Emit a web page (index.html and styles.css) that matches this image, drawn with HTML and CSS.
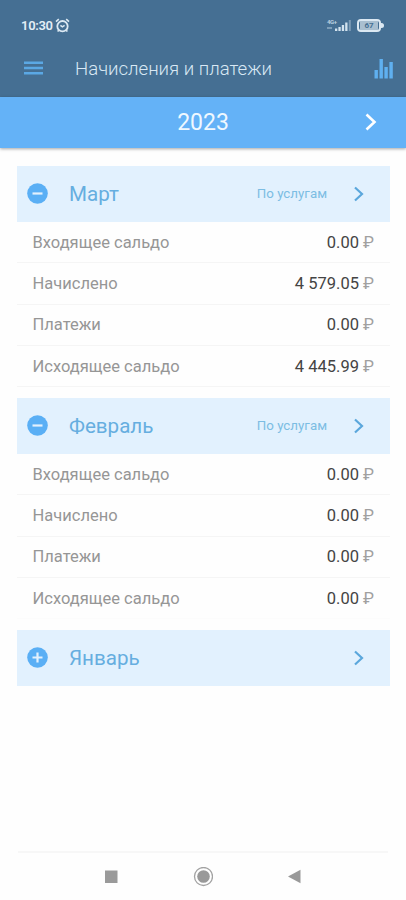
FILE: index.html
```html
<!DOCTYPE html>
<html lang="ru">
<head>
<meta charset="utf-8">
<title>Начисления и платежи</title>
<link rel="stylesheet" href="styles.css">
</head>
<body>
<div class="app">
  <header class="top">
    <div class="status">
      <span class="time">10:30</span>
      <svg class="alarm" width="15" height="15" viewBox="0 0 15 15" fill="none" stroke="#dce9f3" stroke-width="1.8"><circle cx="7.5" cy="8.2" r="5.2"/><path d="M1 3.6 3.8 1.2M14 3.6 11.2 1.2M3.8 12.2 2.6 13.6M11.2 12.2l1.2 1.4M5.4 7.3l2 1.5 2.2-1.4" stroke-width="1.6"/></svg>
      <span class="net"><span>4G+</span><i></i></span>
      <svg class="signal" width="18" height="13" viewBox="0 0 18 13" fill="#d3e3ef"><path d="M1 9.5h2.3V12H1zM4.4 8h2.3v4H4.4zM7.8 6h2.3v6H7.8zM11.2 3.5h2.3V12h-2.3z"/><path d="M14.8 1h2v11h-2z" opacity=".4"/></svg>
      <span class="battery"><span class="charge">67</span></span>
    </div>
    <div class="bar">
      <svg class="menu" width="19" height="14" viewBox="0 0 19 14" fill="#5ba8e4"><path d="M0 .5h19v2.4H0zM0 5.8h19v2.4H0zM0 11.1h19v2.4H0z"/></svg>
      <h1 class="title">Начисления и платежи</h1>
      <svg class="chart" width="19" height="21" viewBox="0 0 19 21" fill="#5fb0f0"><path d="M.5 12h3.4v8.5H.5zM5.5 1h3.4v19.500H5.500zM10.400 9h3.400v11.500h-3.400zM15.400 4h3.400v16.500h-3.400z"/></svg>
    </div>
  </header>
  <div class="year">
    <span class="year-text">2023</span>
    <svg class="next" width="12" height="18" viewBox="0 0 12 18" fill="none" stroke="#fff" stroke-width="2.6"><path d="m1.5 1.5 8 7.5-8 7.5"/></svg>
  </div>
  <main class="list">
    <section class="group">
      <div class="head">
        <svg class="toggle" width="21" height="21" viewBox="0 0 21 21"><circle cx="10.5" cy="10.5" r="10.3" fill="#5aaff5"/><path d="M5.5 10.5h10" stroke="#e3f1fd" stroke-width="2.2"/></svg>
        <h2 class="month">Март</h2>
        <span class="link">По услугам</span>
        <svg class="go" width="11" height="16" viewBox="0 0 11 16" fill="none" stroke="#5ba7dc" stroke-width="2.2"><path d="m2 1.500 7 6.500-7 6.500"/></svg>
      </div>
      <div class="row"><span class="label">Входящее сальдо</span><span class="sum">0.00 <b>₽</b></span></div>
      <div class="row"><span class="label">Начислено</span><span class="sum">4 579.05 <b>₽</b></span></div>
      <div class="row"><span class="label">Платежи</span><span class="sum">0.00 <b>₽</b></span></div>
      <div class="row"><span class="label">Исходящее сальдо</span><span class="sum">4 445.99 <b>₽</b></span></div>
    </section>
    <section class="group">
      <div class="head">
        <svg class="toggle" width="21" height="21" viewBox="0 0 21 21"><circle cx="10.5" cy="10.5" r="10.3" fill="#5aaff5"/><path d="M5.5 10.5h10" stroke="#e3f1fd" stroke-width="2.2"/></svg>
        <h2 class="month">Февраль</h2>
        <span class="link">По услугам</span>
        <svg class="go" width="11" height="16" viewBox="0 0 11 16" fill="none" stroke="#5ba7dc" stroke-width="2.2"><path d="m2 1.500 7 6.500-7 6.500"/></svg>
      </div>
      <div class="row"><span class="label">Входящее сальдо</span><span class="sum">0.00 <b>₽</b></span></div>
      <div class="row"><span class="label">Начислено</span><span class="sum">0.00 <b>₽</b></span></div>
      <div class="row"><span class="label">Платежи</span><span class="sum">0.00 <b>₽</b></span></div>
      <div class="row last"><span class="label">Исходящее сальдо</span><span class="sum">0.00 <b>₽</b></span></div>
    </section>
    <section class="group">
      <div class="head">
        <svg class="toggle" width="21" height="21" viewBox="0 0 21 21"><circle cx="10.5" cy="10.5" r="10.3" fill="#5aaff5"/><path d="M5.5 10.5h10M10.5 5.5v10" stroke="#e3f1fd" stroke-width="2.2"/></svg>
        <h2 class="month">Январь</h2>
        <svg class="go" width="11" height="16" viewBox="0 0 11 16" fill="none" stroke="#5ba7dc" stroke-width="2.2"><path d="m2 1.500 7 6.500-7 6.500"/></svg>
      </div>
    </section>
  </main>
  <nav class="nav">
    <svg width="20" height="20" viewBox="0 0 20 20"><path d="M4 3.5h12.500V16H4z" fill="#9a9a9a"/></svg>
    <svg width="20" height="20" viewBox="0 0 20 20"><circle cx="10.5" cy="9.5" r="9" fill="none" stroke="#a2a2a2" stroke-width="1.3"/><circle cx="10.5" cy="9.5" r="6.3" fill="#999"/></svg>
    <svg width="20" height="20" viewBox="0 0 20 20"><path d="M3 9.500 15.500 2.700v13.600z" fill="#999"/></svg>
  </nav>
</div>
</body>
</html>
```
FILE: styles.css
```css
* { box-sizing: border-box; }
body { margin: 0; background: #fefefe; font-family: Roboto, "Liberation Sans", sans-serif; }
h1, h2 { margin: 0; font-weight: 400; }
svg { display: block; flex: none; }
span, h1, h2 { white-space: nowrap; }
.app { width: 406px; height: 900px; display: flex; flex-direction: column; overflow: hidden; }
.top { height: 97px; flex: none; background: #456f93; }
.status { height: 50px; padding: 0 23px 0 21px; display: flex; align-items: center; }
.time { font-size: 13px; font-weight: 600; color: #e3eef6; letter-spacing: -.3px; }
.alarm { margin-left: 2px; }
.net { margin-left: auto; font-size: 6px; line-height: 6px; font-weight: 700; color: #b9cfe0; width: 8px; height: 13px; letter-spacing: -.4px; }
.net i { display: block; width: 5px; height: 2px; margin-top: 2px; background: #7c9db8; }
.signal { margin: 0 5px 0 -1px; }
.battery { width: 24px; height: 13px; border: 2px solid #dbe8f2; border-radius: 4px; display: flex; margin-right: 2px; position: relative; }
.battery::after { content: ""; position: absolute; right: -5px; top: 2px; width: 3px; height: 5px; background: #dbe8f2; border-radius: 0 3px 3px 0; }
.charge { flex: 1; margin: 0 1px; background: #a9bfd0; color: #456f93; font-size: 8px; line-height: 9px; font-weight: 700; text-align: center; }
.bar { height: 36px; padding: 0 13px 0 24px; display: flex; align-items: center; }
.title { margin-left: 32px; font-size: 18.6px; color: #d9e8f4; font-weight: 300; padding-top: 1px; }
.chart { margin-left: auto; }
.year { height: 51px; flex: none; background: #64b2f7; display: grid; grid-template-columns: 1fr auto 1fr; align-items: center; box-shadow: 0 1px 3px rgba(0,0,0,.35); }
.year-text { grid-column: 2; font-size: 23px; color: #eff8ff; }
.next { justify-self: end; margin: 0 29px 2px 0; }
.list { padding: 18px 16px 0 17px; flex: 1; min-height: 0; }
.group { height: 232.2px; }
.head { height: 56px; background: #e2f1fe; padding: 0 26px 1px 10px; display: flex; align-items: center; }
.month { margin-left: 21px; font-size: 20.6px; color: #66aee0; }
.link { margin-left: auto; font-size: 13.3px; color: #7cbde3; }
.go { margin-left: 26px; }
.month + .go { margin-left: auto; }
.row { height: 41.3px; padding: 0 16px 0 15.5px; border-bottom: 1px solid #f5f5f5; display: flex; justify-content: space-between; align-items: center; }
.last { border-color: #fcfcfc; }
.label { font-size: 16.5px; color: #969696; }
.sum { font-size: 16.5px; color: #444; }
.sum b { font-weight: 400; color: #a0a0a0; }
.nav { height: 49px; flex: none; margin: 0 18px; border-top: 2px solid #f7f7f7; display: flex; justify-content: space-between; padding: 0 83px; align-items: center; }
```
